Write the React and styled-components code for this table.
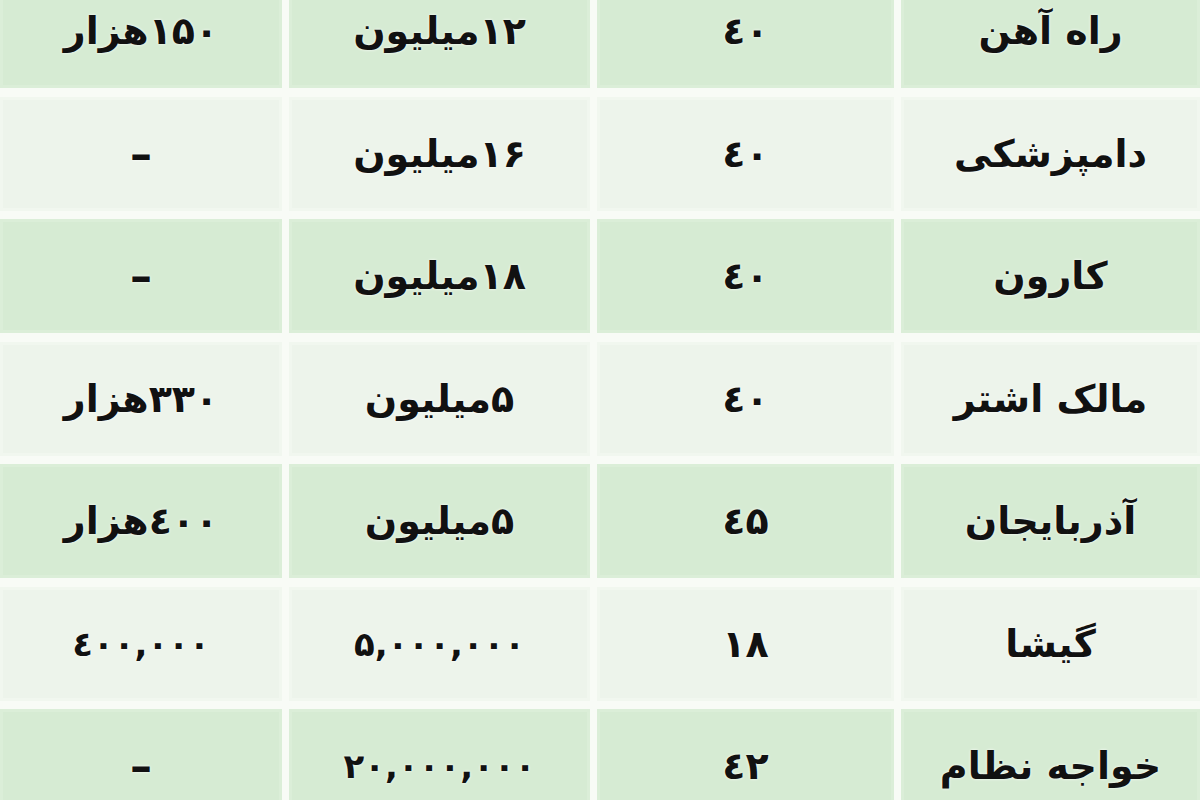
import styled, { createGlobalStyle } from "styled-components";

const GlobalStyle = createGlobalStyle`
  html, body {
    margin: 0;
    padding: 0;
    background: #f8fbf6;
  }
  body {
    width: 1200px;
    height: 800px;
    overflow: hidden;
    font-family: "DejaVu Sans", "Noto Sans", sans-serif;
  }
`;

const Page = styled.div`
  width: 1200px;
  height: 800px;
  overflow: hidden;
  background: #f8fbf6;
`;

const Table = styled.div`
  direction: rtl;
  display: grid;
  grid-template-columns: 299px 297px 301px 1fr;
  grid-auto-rows: 114px;
  column-gap: 7px;
  row-gap: 8.5px;
  margin-top: -26px;
`;

const Cell = styled.div`
  display: flex;
  align-items: center;
  justify-content: center;
  background: ${(p) => (p.$green ? "#d6ebd3" : "#edf4eb")};
  box-shadow: inset 0 0 0 3px ${(p) => (p.$green ? "#dbeed8" : "#f1f7ef")};
  color: #111;
  font-size: ${(p) => (p.$tight ? "34px" : "38px")};
  font-weight: 700;
  white-space: nowrap;
  text-shadow: 0 0 3px #fff;
`;

const Dash = styled.span`
  font-size: 44px;
  font-weight: 700;
  line-height: 1;
`;

const rows = [
  ["راه آهن", "٤۰", "۱۲میلیون", "۱۵۰هزار"],
  ["دامپزشکی", "٤۰", "۱۶میلیون", "-"],
  ["کارون", "٤۰", "۱۸میلیون", "-"],
  ["مالک اشتر", "٤۰", "۵میلیون", "۳۳۰هزار"],
  ["آذربایجان", "٤۵", "۵میلیون", "٤۰۰هزار"],
  ["گیشا", "۱۸", "۵,۰۰۰,۰۰۰", "٤۰۰,۰۰۰"],
  ["خواجه نظام", "٤۲", "۲۰,۰۰۰,۰۰۰", "-"],
];

export default function App() {
  return (
    <Page>
      <GlobalStyle />
      <Table>
        {rows.map((row, i) =>
          row.map((value, j) => (
            <Cell
              key={`${i}-${j}`}
              $green={i % 2 === 0}
              $tight={value.includes(",")}
            >
              {value === "-" ? <Dash>–</Dash> : value}
            </Cell>
          ))
        )}
      </Table>
    </Page>
  );
}
